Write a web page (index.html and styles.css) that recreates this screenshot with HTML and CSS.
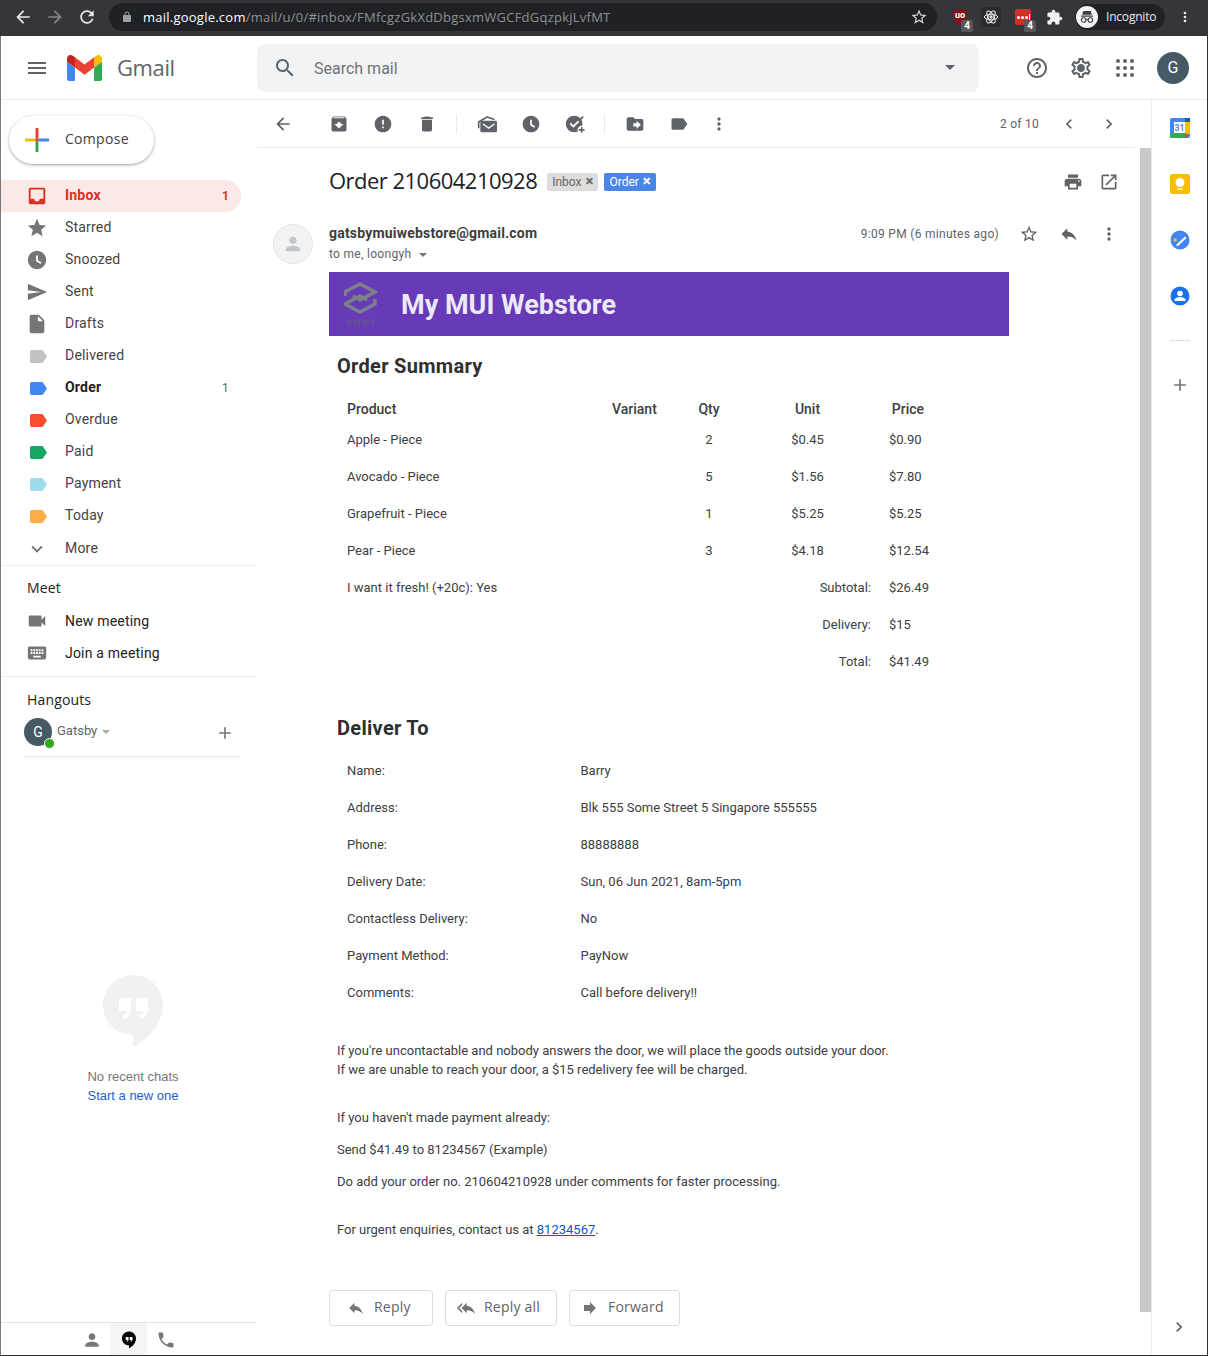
FILE: index.html
```html
<!DOCTYPE html>
<html lang="en">
<head>
    <meta charset="UTF-8">
    <meta name="viewport" content="width=device-width, initial-scale=1.0">
    <title>Order 210604210928 - Gmail</title>
    <link rel="stylesheet" href="styles.css">
</head>
<body>
    <svg class="sprite" xmlns="http://www.w3.org/2000/svg">
        <symbol id="i-back" viewBox="0 0 24 24"><path d="M20 11H7.83l5.59-5.59L12 4l-8 8 8 8 1.41-1.41L7.83 13H20v-2z"/></symbol>
        <symbol id="i-refresh" viewBox="0 0 24 24"><path d="M17.65 6.35C16.2 4.9 14.21 4 12 4c-4.42 0-7.99 3.58-7.99 8s3.57 8 7.99 8c3.73 0 6.84-2.55 7.73-6h-2.08c-.82 2.33-3.04 4-5.65 4-3.31 0-6-2.69-6-6s2.69-6 6-6c1.66 0 3.14.69 4.22 1.78L13 11h7V4l-2.35 2.35z"/></symbol>
        <symbol id="i-lock" viewBox="0 0 24 24"><path d="M18 8h-1V6c0-2.76-2.24-5-5-5S7 3.24 7 6v2H6c-1.1 0-2 .9-2 2v10c0 1.1.9 2 2 2h12c1.1 0 2-.9 2-2V10c0-1.1-.9-2-2-2zM9 6c0-1.66 1.34-3 3-3s3 1.34 3 3v2H9V6z"/></symbol>
        <symbol id="i-star-o" viewBox="0 0 24 24"><path d="M22 9.24l-7.19-.62L12 2 9.19 8.63 2 9.24l5.46 4.73L5.82 21 12 17.27 18.18 21l-1.63-7.03L22 9.24zM12 15.4l-3.76 2.27 1-4.28-3.32-2.88 4.38-.38L12 6.1l1.71 4.04 4.38.38-3.32 2.88 1 4.28L12 15.4z"/></symbol>
        <symbol id="i-star" viewBox="0 0 24 24"><path d="M12 17.27L18.18 21l-1.64-7.03L22 9.24l-7.19-.61L12 2 9.19 8.63 2 9.24l5.46 4.73L5.82 21z"/></symbol>
        <symbol id="i-puzzle" viewBox="0 0 24 24"><path d="M20.5 11H19V7c0-1.1-.9-2-2-2h-4V3.5C13 2.12 11.88 1 10.5 1S8 2.12 8 3.5V5H4c-1.1 0-1.99.9-1.99 2v3.8H3.5c1.49 0 2.7 1.21 2.7 2.7s-1.21 2.7-2.7 2.7H2V20c0 1.1.9 2 2 2h3.8v-1.5c0-1.49 1.21-2.7 2.7-2.7 1.49 0 2.7 1.21 2.7 2.7V22H17c1.1 0 2-.9 2-2v-4h1.5c1.38 0 2.5-1.12 2.5-2.5S21.88 11 20.5 11z"/></symbol>
        <symbol id="i-more" viewBox="0 0 24 24"><circle cx="12" cy="6" r="2"/><circle cx="12" cy="12" r="2"/><circle cx="12" cy="18" r="2"/></symbol>
        <symbol id="i-menu" viewBox="0 0 24 24"><path d="M3 18h18v-2H3v2zm0-5h18v-2H3v2zm0-7v2h18V6H3z"/></symbol>
        <symbol id="i-search" viewBox="0 0 24 24"><path d="M15.5 14h-.79l-.28-.27C15.41 12.59 16 11.11 16 9.5 16 5.91 13.09 3 9.5 3S3 5.91 3 9.5 5.91 16 9.5 16c1.61 0 3.09-.59 4.23-1.57l.27.28v.79l5 4.99L20.49 19l-4.99-5zm-6 0C7.01 14 5 11.99 5 9.5S7.01 5 9.5 5 14 7.01 14 9.5 11.99 14 9.5 14z"/></symbol>
        <symbol id="i-help" viewBox="0 0 24 24"><path d="M11 18h2v-2h-2v2zm1-16C6.48 2 2 6.48 2 12s4.48 10 10 10 10-4.48 10-10S17.52 2 12 2zm0 18c-4.41 0-8-3.59-8-8s3.59-8 8-8 8 3.59 8 8-3.59 8-8 8zm0-14c-2.21 0-4 1.79-4 4h2c0-1.1.9-2 2-2s2 .9 2 2c0 2-3 1.75-3 5h2c0-2.25 3-2.5 3-5 0-2.21-1.79-4-4-4z"/></symbol>
        <symbol id="i-gear" viewBox="0 0 24 24"><path d="M19.43 12.98c.04-.32.07-.64.07-.98 0-.34-.03-.66-.07-.98l2.11-1.65c.19-.15.24-.42.12-.64l-2-3.46c-.09-.16-.26-.25-.44-.25-.06 0-.12.01-.17.03l-2.49 1c-.52-.4-1.08-.73-1.69-.98l-.38-2.65C14.46 2.18 14.25 2 14 2h-4c-.25 0-.46.18-.49.42l-.38 2.65c-.61.25-1.17.59-1.69.98l-2.49-1c-.06-.02-.12-.03-.18-.03-.17 0-.34.09-.43.25l-2 3.46c-.13.22-.07.49.12.64l2.11 1.65c-.04.32-.07.65-.07.98 0 .33.03.66.07.98l-2.11 1.65c-.19.15-.24.42-.12.64l2 3.46c.09.16.26.25.44.25.06 0 .12-.01.17-.03l2.49-1c.52.4 1.08.73 1.69.98l.38 2.65c.03.24.24.42.49.42h4c.25 0 .46-.18.49-.42l.38-2.65c.61-.25 1.17-.59 1.69-.98l2.49 1c.06.02.12.03.18.03.17 0 .34-.09.43-.25l2-3.46c.12-.22.07-.49-.12-.64l-2.11-1.65zm-1.98-1.71c.04.31.05.52.05.73 0 .21-.02.43-.05.73l-.14 1.13.89.7 1.08.84-.7 1.21-1.27-.51-1.04-.42-.9.68c-.43.32-.84.56-1.25.73l-1.06.43-.16 1.13-.2 1.35h-1.4l-.19-1.35-.16-1.13-1.06-.43c-.43-.18-.83-.41-1.23-.71l-.91-.7-1.06.43-1.27.51-.7-1.21 1.08-.84.89-.7-.14-1.13c-.03-.31-.05-.54-.05-.74s.02-.43.05-.73l.14-1.13-.89-.7-1.08-.84.7-1.21 1.27.51 1.04.42.9-.68c.43-.32.84-.56 1.25-.73l1.06-.43.16-1.13.2-1.35h1.39l.19 1.35.16 1.13 1.06.43c.43.18.83.41 1.23.71l.91.7 1.06-.43 1.27-.51.7 1.21-1.07.85-.89.7.14 1.13zM12 8c-2.21 0-4 1.79-4 4s1.79 4 4 4 4-1.79 4-4-1.79-4-4-4z"/></symbol>
        <symbol id="i-apps" viewBox="0 0 24 24"><circle cx="5" cy="5" r="2"/><circle cx="12" cy="5" r="2"/><circle cx="19" cy="5" r="2"/><circle cx="5" cy="12" r="2"/><circle cx="12" cy="12" r="2"/><circle cx="19" cy="12" r="2"/><circle cx="5" cy="19" r="2"/><circle cx="12" cy="19" r="2"/><circle cx="19" cy="19" r="2"/></symbol>
        <symbol id="i-inbox" viewBox="0 0 24 24"><path d="M19 3H5c-1.1 0-2 .9-2 2v14c0 1.1.9 2 2 2h14c1.1 0 2-.9 2-2V5c0-1.1-.9-2-2-2zm0 12h-4c0 1.66-1.34 3-3 3s-3-1.34-3-3H5V5h14v10z"/></symbol>
        <symbol id="i-clock" viewBox="0 0 24 24"><path d="M11.99 2C6.47 2 2 6.48 2 12s4.47 10 9.99 10C17.52 22 22 17.52 22 12S17.52 2 11.99 2zM15.8 16.4L11 13.4V7h2v5.3l3.9 2.4-1.1 1.7z"/></symbol>
        <symbol id="i-send" viewBox="0 0 24 24"><path d="M2.01 21L23 12 2.01 3 2 10l15 2-15 2z"/></symbol>
        <symbol id="i-file" viewBox="0 0 24 24"><path d="M6 2c-1.1 0-1.99.9-1.99 2L4 20c0 1.1.89 2 1.99 2H18c1.1 0 2-.9 2-2V8l-6-6H6zm7 7V3.5L18.5 9H13z"/></symbol>
        <symbol id="i-tag" viewBox="3 5 19 14" preserveAspectRatio="none"><path d="M17.63 5.84C17.27 5.33 16.67 5 16 5L5 5.01C3.9 5.01 3 5.9 3 7v10c0 1.1.9 1.99 2 1.99L16 19c.67 0 1.27-.33 1.63-.84L22 12l-4.37-6.16z"/></symbol>
        <symbol id="i-label" viewBox="0 0 24 24"><path d="M17.63 5.84C17.27 5.33 16.67 5 16 5L5 5.01C3.9 5.01 3 5.9 3 7v10c0 1.1.9 1.99 2 1.99L16 19c.67 0 1.27-.33 1.63-.84L22 12l-4.37-6.16z"/></symbol>
        <symbol id="i-down" viewBox="0 0 24 24"><path d="M16.59 8.59L12 13.17 7.41 8.59 6 10l6 6 6-6z"/></symbol>
        <symbol id="i-video" viewBox="0 0 24 24"><path d="M17 10.5V7c0-.55-.45-1-1-1H4c-.55 0-1 .45-1 1v10c0 .55.45 1 1 1h12c.55 0 1-.45 1-1v-3.5l4 4v-11l-4 4z"/></symbol>
        <symbol id="i-keyboard" viewBox="0 0 24 24"><path d="M20 5H4c-1.1 0-1.99.9-1.99 2L2 17c0 1.1.9 2 2 2h16c1.1 0 2-.9 2-2V7c0-1.1-.9-2-2-2zm-9 3h2v2h-2V8zm0 3h2v2h-2v-2zM8 8h2v2H8V8zm0 3h2v2H8v-2zm-1 2H5v-2h2v2zm0-3H5V8h2v2zm9 7H8v-2h8v2zm0-4h-2v-2h2v2zm0-3h-2V8h2v2zm3 3h-2v-2h2v2zm0-3h-2V8h2v2z"/></symbol>
        <symbol id="i-plus" viewBox="0 0 24 24"><path d="M19 13h-6v6h-2v-6H5v-2h6V5h2v6h6v2z"/></symbol>
        <symbol id="i-person" viewBox="0 0 24 24"><path d="M12 12c2.21 0 4-1.79 4-4s-1.79-4-4-4-4 1.79-4 4 1.79 4 4 4zm0 2c-2.67 0-8 1.34-8 4v2h16v-2c0-2.66-5.33-4-8-4z"/></symbol>
        <symbol id="i-phone" viewBox="0 0 24 24"><path d="M6.62 10.79c1.44 2.83 3.76 5.14 6.59 6.59l2.2-2.2c.27-.27.67-.36 1.02-.24 1.12.37 2.33.57 3.57.57.55 0 1 .45 1 1V20c0 .55-.45 1-1 1-9.39 0-17-7.61-17-17 0-.55.45-1 1-1h3.5c.55 0 1 .45 1 1 0 1.25.2 2.45.57 3.57.11.35.03.74-.25 1.02l-2.2 2.2z"/></symbol>
        <symbol id="i-chat" viewBox="0 0 60 72"><path d="M30 0C13.4 0 0 13.4 0 30s13.4 30 30 30v12c16-8 30-24 30-42C60 13.4 46.6 0 30 0z"/><path class="quote" d="M16 23h12v11c0 5-3 9-8 10v-4c2-.5 3.5-2 4-4h-8zM33 23h12v11c0 5-3 9-8 10v-4c2-.5 3.5-2 4-4h-8z"/></symbol>
        <symbol id="i-archive" viewBox="0 0 24 24"><path d="M20.54 5.23l-1.39-1.68C18.88 3.21 18.47 3 18 3H6c-.47 0-.88.21-1.16.55L3.46 5.23C3.17 5.57 3 6.02 3 6.5V19c0 1.1.9 2 2 2h14c1.1 0 2-.9 2-2V6.5c0-.48-.17-.93-.46-1.27zM12 17.5L6.5 12H10v-2h4v2h3.5L12 17.5zM5.12 5l.81-1h12l.94 1H5.12z"/></symbol>
        <symbol id="i-report" viewBox="0 0 24 24"><path d="M12 2C6.48 2 2 6.48 2 12s4.48 10 10 10 10-4.48 10-10S17.52 2 12 2zm1 15h-2v-2h2v2zm0-4h-2V7h2v6z"/></symbol>
        <symbol id="i-delete" viewBox="0 0 24 24"><path d="M6 19c0 1.1.9 2 2 2h8c1.1 0 2-.9 2-2V7H6v12zM19 4h-3.5l-1-1h-5l-1 1H5v2h14V4z"/></symbol>
        <symbol id="i-unread" viewBox="0 0 24 24"><path class="roof" d="M2 17V9.5L12 3.5l9 3"/><path fill-rule="evenodd" d="M6 8h16c1.1 0 2 .9 2 2v10c0 1.1-.9 2-2 2H6c-1.1 0-2-.9-2-2V10c0-1.1.9-2 2-2zM7 11l7 5 7-5v2l-7 5-7-5z"/></symbol>
        <symbol id="i-task" viewBox="0 0 24 24"><path fill-rule="evenodd" d="M11 2a10 10 0 1 0 0 20 10 10 0 0 0 0-20zM10 16.5L5.5 12 7 10.5l3 3 6-6L17.5 9z"/><path d="M15.5 8L21 2.5 22.5 4 17 9.5z"/><circle class="quote" cx="20" cy="19" r="5"/><path d="M19 15.5h2V18h2.5v2H21v2.5h-2V20h-2.5v-2H19z"/></symbol>
        <symbol id="i-move" viewBox="0 0 24 24"><path d="M20 6h-8l-2-2H4c-1.1 0-2 .9-2 2v12c0 1.1.9 2 2 2h16c1.1 0 2-.9 2-2V8c0-1.1-.9-2-2-2zm-6 12v-3h-4v-4h4V8l5 5-5 5z"/></symbol>
        <symbol id="i-left" viewBox="0 0 24 24"><path d="M15.41 7.41L14 6l-6 6 6 6 1.41-1.41L10.83 12z"/></symbol>
        <symbol id="i-right" viewBox="0 0 24 24"><path d="M10 6L8.59 7.41 13.17 12l-4.58 4.59L10 18l6-6z"/></symbol>
        <symbol id="i-print" viewBox="0 0 24 24"><path d="M19 8H5c-1.66 0-3 1.34-3 3v6h4v4h12v-4h4v-6c0-1.66-1.34-3-3-3zm-3 11H8v-5h8v5zm3-7c-.55 0-1-.45-1-1s.45-1 1-1 1 .45 1 1-.45 1-1 1zm-1-9H6v4h12V3z"/></symbol>
        <symbol id="i-open" viewBox="0 0 24 24"><path d="M19 19H5V5h7V3H5c-1.11 0-2 .9-2 2v14c0 1.1.89 2 2 2h14c1.1 0 2-.9 2-2v-7h-2v7zM14 3v2h3.59l-9.83 9.83 1.41 1.41L19 6.41V10h2V3h-7z"/></symbol>
        <symbol id="i-reply" viewBox="0 0 24 24"><path d="M10 9V5l-7 7 7 7v-4.1c5 0 8.5 1.6 11 5.1-1-5-4-10-11-11z"/></symbol>
        <symbol id="i-replyall" viewBox="0 0 24 24"><path d="M7 8V5l-7 7 7 7v-3l-4-4 4-4zm6 1V5l-7 7 7 7v-4.1c5 0 8.5 1.6 11 5.1-1-5-4-10-11-11z"/></symbol>
        <symbol id="i-forward" viewBox="0 0 24 24"><path d="M12 8V4l8 8-8 8v-4H4V8z"/></symbol>
    </svg>

    <div class="chrome">
        <svg class="c-ico"><use href="#i-back"/></svg>
        <svg class="c-ico c-dim"><use href="#i-back" transform="rotate(180 10 10)"/></svg>
        <svg class="c-ico"><use href="#i-refresh"/></svg>
        <div class="omnibox">
            <svg class="lock"><use href="#i-lock"/></svg>
            <span class="url"><b>mail.google.com</b>/mail/u/0/#inbox/FMfcgzGkXdDbgsxmWGCFdGqzpkjLvfMT</span>
            <svg class="omni-star"><use href="#i-star-o"/></svg>
        </div>
        <div class="ext ext-ublock">
            <svg viewBox="0 0 16 18" width="16" height="16"><path fill="#8a0f12" d="M1 2l7-2 7 2v7c0 4-3 7-7 9-4-2-7-5-7-9z"/></svg>
            <span class="ext-mark">uo</span>
            <span class="ext-badge">4</span>
        </div>
        <div class="ext ext-react">
            <svg viewBox="0 0 24 24" width="16" height="16" fill="none" stroke="#e8eaed" stroke-width="1.5"><ellipse cx="12" cy="12" rx="10" ry="4.2"/><ellipse cx="12" cy="12" rx="10" ry="4.2" transform="rotate(60 12 12)"/><ellipse cx="12" cy="12" rx="10" ry="4.2" transform="rotate(120 12 12)"/><circle cx="12" cy="12" r="1.8" fill="#e8eaed"/></svg>
        </div>
        <div class="ext ext-lastpass">
            <span class="lp-box"><i></i><i></i><i></i><em></em></span>
            <span class="ext-badge">4</span>
        </div>
        <svg class="c-ico puzzle"><use href="#i-puzzle"/></svg>
        <div class="incognito">
            <span class="inc-face">
                <svg viewBox="0 0 24 24" width="18" height="18"><path fill="#3c4043" d="M4 10h16v1.5H4zM7 4h10l1.5 5h-13z"/><g fill="none" stroke="#3c4043" stroke-width="1.5"><circle cx="7.5" cy="16" r="3"/><circle cx="16.5" cy="16" r="3"/><path d="M10.5 15.5h3"/></g></svg>
            </span>
            <span class="inc-text">Incognito</span>
        </div>
        <svg class="c-ico c-more"><use href="#i-more"/></svg>
    </div>

    <div class="app">
        <header class="topbar">
            <div class="brand">
                <svg class="ico hamburger"><use href="#i-menu"/></svg>
                <svg class="logo" viewBox="52 42 88 66" preserveAspectRatio="none">
                    <path fill="#4285f4" d="M58 108h14V74L52 59v43c0 3.32 2.69 6 6 6"/>
                    <path fill="#34a853" d="M120 108h14c3.32 0 6-2.69 6-6V59l-20 15"/>
                    <path fill="#fbbc04" d="M120 48v26l20-15v-8c0-7.42-8.47-11.65-14.4-7.2"/>
                    <path fill="#ea4335" d="M72 74V48l24 18 24-18v26L96 92"/>
                    <path fill="#c5221f" d="M52 51v8l20 15V48l-5.6-4.2c-5.94-4.45-14.4-.22-14.4 7.2"/>
                </svg>
                <span class="brand-name">Gmail</span>
            </div>
            <div class="searchbox">
                <svg class="ico"><use href="#i-search"/></svg>
                <span class="search-text">Search mail</span>
                <span class="caret"></span>
            </div>
            <div class="top-actions">
                <svg class="ico"><use href="#i-help"/></svg>
                <svg class="ico"><use href="#i-gear"/></svg>
                <svg class="ico"><use href="#i-apps"/></svg>
                <span class="avatar avatar-top">G</span>
            </div>
        </header>

        <div class="main">
            <aside class="sidebar">
                <div class="compose">
                    <svg viewBox="0 0 24 24" width="24" height="24">
                        <path fill="#fbbc04" d="M0 10.5h10.5v3H0z"/>
                        <path fill="#4285f4" d="M13.5 10.5H24v3H13.5z"/>
                        <path fill="#ea4335" d="M10.5 0h3v10.5h-3z"/>
                        <path fill="#34a853" d="M10.5 13.5h3V24h-3z"/>
                        <path fill="#d33" d="M10.5 10.5h3v3h-3z"/>
                    </svg>
                    <span class="compose-text">Compose</span>
                </div>

                <nav class="nav">
                    <a class="nav-row active"><svg class="nav-ico"><use href="#i-inbox"/></svg><span>Inbox</span><em>1</em></a>
                    <a class="nav-row"><svg class="nav-ico"><use href="#i-star"/></svg><span>Starred</span></a>
                    <a class="nav-row"><svg class="nav-ico"><use href="#i-clock"/></svg><span>Snoozed</span></a>
                    <a class="nav-row"><svg class="nav-ico"><use href="#i-send"/></svg><span>Sent</span></a>
                    <a class="nav-row"><svg class="nav-ico"><use href="#i-file"/></svg><span>Drafts</span></a>
                    <a class="nav-row"><svg class="tag tag-gray"><use href="#i-tag"/></svg><span>Delivered</span></a>
                    <a class="nav-row strong"><svg class="tag tag-blue"><use href="#i-tag"/></svg><span>Order</span><em>1</em></a>
                    <a class="nav-row"><svg class="tag tag-red"><use href="#i-tag"/></svg><span>Overdue</span></a>
                    <a class="nav-row"><svg class="tag tag-green"><use href="#i-tag"/></svg><span>Paid</span></a>
                    <a class="nav-row"><svg class="tag tag-sky"><use href="#i-tag"/></svg><span>Payment</span></a>
                    <a class="nav-row"><svg class="tag tag-orange"><use href="#i-tag"/></svg><span>Today</span></a>
                    <a class="nav-row nav-more"><svg class="nav-ico"><use href="#i-down"/></svg><span>More</span></a>
                </nav>

                <section class="side-section meet">
                    <h4>Meet</h4>
                    <a class="nav-row"><svg class="nav-ico"><use href="#i-video"/></svg><span>New meeting</span></a>
                    <a class="nav-row"><svg class="nav-ico"><use href="#i-keyboard"/></svg><span>Join a meeting</span></a>
                </section>

                <section class="side-section hangouts">
                    <h4>Hangouts</h4>
                    <div class="hangout-user">
                        <span class="avatar avatar-small">G<i class="online"></i></span>
                        <span class="hangout-name">Gatsby</span>
                        <span class="caret caret-small"></span>
                        <svg class="hangout-add"><use href="#i-plus"/></svg>
                    </div>
                </section>

                <div class="no-chats">
                    <svg class="chat-big"><use href="#i-chat"/></svg>
                    <p>No recent chats</p>
                    <a>Start a new one</a>
                </div>

                <div class="side-tabs">
                    <span class="side-tab"><svg><use href="#i-person"/></svg></span>
                    <span class="side-tab on"><svg class="chat-small"><use href="#i-chat"/></svg></span>
                    <span class="side-tab"><svg><use href="#i-phone"/></svg></span>
                </div>
            </aside>

            <main class="content">
                <div class="toolbar">
                    <span class="tool"><svg class="ico"><use href="#i-back"/></svg></span>
                    <span class="tool tool-first"><svg class="ico"><use href="#i-archive"/></svg></span>
                    <span class="tool"><svg class="ico"><use href="#i-report"/></svg></span>
                    <span class="tool"><svg class="ico"><use href="#i-delete"/></svg></span>
                    <span class="tool-sep"></span>
                    <span class="tool"><svg class="ico"><use href="#i-unread"/></svg></span>
                    <span class="tool"><svg class="ico"><use href="#i-clock"/></svg></span>
                    <span class="tool"><svg class="ico"><use href="#i-task"/></svg></span>
                    <span class="tool-sep"></span>
                    <span class="tool"><svg class="ico"><use href="#i-move"/></svg></span>
                    <span class="tool"><svg class="ico"><use href="#i-label"/></svg></span>
                    <span class="tool tool-narrow"><svg class="ico"><use href="#i-more"/></svg></span>
                    <span class="pager">2 of 10</span>
                    <span class="tool tool-page"><svg class="ico"><use href="#i-left"/></svg></span>
                    <span class="tool tool-page"><svg class="ico"><use href="#i-right"/></svg></span>
                </div>

                <div class="mail-wrap">
                    <div class="mail">
                        <div class="subject-row">
                            <h2 class="subject">Order 210604210928</h2>
                            <span class="chip chip-gray">Inbox <b>×</b></span>
                            <span class="chip chip-blue">Order <b>×</b></span>
                            <span class="subject-actions">
                                <svg class="ico"><use href="#i-print"/></svg>
                                <svg class="ico"><use href="#i-open"/></svg>
                            </span>
                        </div>

                        <div class="sender-row">
                            <span class="sender-pic"><svg><use href="#i-person"/></svg></span>
                            <div class="sender-info">
                                <div class="sender-name">gatsbymuiwebstore@gmail.com</div>
                                <div class="sender-to">to me, loongyh <span class="caret caret-small"></span></div>
                            </div>
                            <span class="sender-time">9:09 PM (6 minutes ago)</span>
                            <span class="sender-actions">
                                <svg class="ico"><use href="#i-star-o"/></svg>
                                <svg class="ico"><use href="#i-reply"/></svg>
                                <svg class="ico"><use href="#i-more"/></svg>
                            </span>
                        </div>

                        <div class="email">
                            <div class="banner">
                                <svg class="store-logo" viewBox="0 0 34 44">
                                    <path d="M1 14V10L16 2l15 8-15 8-7-4"/>
                                    <path d="M31 17v5l-15 8-15-8 15-8 7 4"/>
                                    <text x="17" y="43" text-anchor="middle">GMWS</text>
                                </svg>
                                <span class="banner-title">My MUI Webstore</span>
                            </div>

                            <h3 class="email-h first">Order Summary</h3>
                            <table class="order">
                                <colgroup>
                                    <col class="c-product"><col class="c-variant"><col class="c-qty"><col class="c-unit"><col class="c-price">
                                </colgroup>
                                <thead>
                                    <tr><th class="left">Product</th><th class="left">Variant</th><th>Qty</th><th>Unit</th><th>Price</th></tr>
                                </thead>
                                <tbody>
                                    <tr><td>Apple - Piece</td><td></td><td class="mid">2</td><td class="mid">$0.45</td><td>$0.90</td></tr>
                                    <tr><td>Avocado - Piece</td><td></td><td class="mid">5</td><td class="mid">$1.56</td><td>$7.80</td></tr>
                                    <tr><td>Grapefruit - Piece</td><td></td><td class="mid">1</td><td class="mid">$5.25</td><td>$5.25</td></tr>
                                    <tr><td>Pear - Piece</td><td></td><td class="mid">3</td><td class="mid">$4.18</td><td>$12.54</td></tr>
                                    <tr><td colspan="3">I want it fresh! (+20c): Yes</td><td class="sum">Subtotal:</td><td>$26.49</td></tr>
                                    <tr><td colspan="3"></td><td class="sum">Delivery:</td><td>$15</td></tr>
                                    <tr><td colspan="3"></td><td class="sum">Total:</td><td>$41.49</td></tr>
                                </tbody>
                            </table>

                            <h3 class="email-h">Deliver To</h3>
                            <table class="deliver">
                                <tr><td class="d-key">Name:</td><td>Barry</td></tr>
                                <tr><td class="d-key">Address:</td><td>Blk 555 Some Street 5 Singapore 555555</td></tr>
                                <tr><td class="d-key">Phone:</td><td>88888888</td></tr>
                                <tr><td class="d-key">Delivery Date:</td><td>Sun, 06 Jun 2021, 8am-5pm</td></tr>
                                <tr><td class="d-key">Contactless Delivery:</td><td>No</td></tr>
                                <tr><td class="d-key">Payment Method:</td><td>PayNow</td></tr>
                                <tr><td class="d-key">Comments:</td><td>Call before delivery!!</td></tr>
                            </table>

                            <p class="note note-first">If you're uncontactable and nobody answers the door, we will place the goods outside your door.<br>If we are unable to reach your door, a $15 redelivery fee will be charged.</p>
                            <p class="note note-gap">If you haven't made payment already:</p>
                            <p class="note note-small">Send $41.49 to 81234567 (Example)</p>
                            <p class="note note-small">Do add your order no. 210604210928 under comments for faster processing.</p>
                            <p class="note note-gap">For urgent enquiries, contact us at <a class="link">81234567</a>.</p>
                        </div>

                        <div class="reply-btns">
                            <span class="reply-btn b-reply"><svg><use href="#i-reply"/></svg><span>Reply</span></span>
                            <span class="reply-btn b-all"><svg><use href="#i-replyall"/></svg><span>Reply all</span></span>
                            <span class="reply-btn b-fwd"><svg><use href="#i-forward"/></svg><span>Forward</span></span>
                        </div>
                    </div>
                    <div class="scrollbar"></div>
                </div>
            </main>

            <aside class="rail">
                <svg class="rail-ico" viewBox="0 0 20 20">
                    <rect width="20" height="20" rx="2" fill="#4285f4"/>
                    <rect x="15" y="4" width="5" height="12" fill="#fbbc04"/>
                    <rect y="15" width="16" height="5" fill="#34a853"/>
                    <rect x="15" width="5" height="4" fill="#1a56c4"/>
                    <path d="M15 16h5l-5 4z" fill="#ea4335"/>
                    <rect x="4" y="4" width="11" height="11" fill="#fff"/>
                    <text x="9.5" y="13" text-anchor="middle">31</text>
                </svg>
                <svg class="rail-ico" viewBox="0 0 20 20">
                    <rect width="20" height="20" rx="2" fill="#fbbc04"/>
                    <circle cx="10" cy="8.5" r="4.5" fill="#fff"/>
                    <rect x="7.5" y="14.5" width="5" height="1.5" fill="#fff"/>
                </svg>
                <svg class="rail-ico" viewBox="0 0 20 20">
                    <circle cx="10" cy="10" r="9.5" fill="#4285f4"/>
                    <path d="M6.5 14.5l8.5-8 1.5 1.5-8.5 8H6.5z" fill="#fff"/>
                    <circle cx="5" cy="10" r="1.8" fill="#fbbc04"/>
                </svg>
                <svg class="rail-ico" viewBox="0 0 20 20">
                    <circle cx="10" cy="10" r="9.5" fill="#1a73e8"/>
                    <circle cx="10" cy="7.5" r="2.8" fill="#fff"/>
                    <path d="M4.5 14c0-2 3.5-3 5.5-3s5.5 1 5.5 3v1h-11z" fill="#fff"/>
                </svg>
                <span class="rail-sep"></span>
                <svg class="ico rail-plus"><use href="#i-plus"/></svg>
                <svg class="ico rail-chev"><use href="#i-right"/></svg>
            </aside>
        </div>
    </div>
</body>
</html>
```

FILE: styles.css
```css
* {
    box-sizing: border-box;
}
html, body {
    margin: 0;
    height: 1356px;
    overflow: hidden;
}
body {
    font-family: Roboto, "Liberation Sans", sans-serif;
    font-size: 14px;
    color: #202124;
    background: #fff;
}
.sprite {
    display: none;
}

/* browser bar */
.chrome {
    height: 36px;
    padding-bottom: 2px;
    background: #35363a;
    display: flex;
    align-items: center;
    position: relative;
}
.c-ico {
    width: 20px;
    height: 20px;
    fill: #e8eaed;
    margin-left: 12px;
}
.c-ico:first-child {
    margin-left: 13px;
}
.c-dim {
    fill: #84878b;
}
.omnibox {
    width: 828px;
    height: 28px;
    margin-left: 12px;
    background: #202124;
    border-radius: 14px;
    display: flex;
    align-items: center;
    padding: 0 8px 0 12px;
}
.lock {
    width: 12px;
    height: 12px;
    fill: #9aa0a6;
}
.url {
    margin-left: 10px;
    font-family: "Open Sans", sans-serif;
    font-size: 13px;
    letter-spacing: 0.24px;
    color: #8e9194;
    white-space: nowrap;
}
.url b {
    font-weight: 400;
    color: #fff;
}
.omni-star {
    width: 18px;
    height: 18px;
    fill: #d6d8da;
    margin-left: auto;
    margin-right: 1px;
}
.ext {
    width: 20px;
    height: 20px;
    position: relative;
    display: flex;
    align-items: center;
    justify-content: center;
}
.ext-ublock {
    margin-left: 13px;
}
.ext-react {
    margin-left: 11px;
    background: #2b2c2f;
}
.ext-lastpass {
    margin-left: 12px;
}
.ext-mark {
    position: absolute;
    left: 5px;
    top: 3px;
    font-size: 9px;
    line-height: 10px;
    font-weight: 700;
    color: #fff;
}
.ext-badge {
    position: absolute;
    right: -3px;
    bottom: -5px;
    width: 12px;
    height: 12px;
    background: #55575b;
    border-radius: 2px;
    color: #fff;
    font-size: 10px;
    font-weight: 700;
    line-height: 12px;
    text-align: center;
}
.lp-box {
    width: 16px;
    height: 16px;
    background: #d32d27;
    border-radius: 2px;
    display: flex;
    align-items: center;
    justify-content: center;
    gap: 1px;
}
.lp-box i {
    width: 3px;
    height: 3px;
    border-radius: 50%;
    background: #fff;
}
.lp-box em {
    width: 1px;
    height: 6px;
    background: #fff;
}
.puzzle {
    width: 17px;
    height: 17px;
    margin-left: 13px;
    fill: #f1f3f4;
}
.incognito {
    width: 90px;
    height: 26px;
    margin-left: 12px;
    background: #202124;
    border-radius: 13px;
    display: flex;
    align-items: center;
    gap: 8px;
    padding-left: 1px;
    font-family: "Open Sans", sans-serif;
    font-size: 12px;
    color: #e8eaed;
    letter-spacing: -0.2px;
}
.inc-text {
    padding-bottom: 1px;
}
.inc-face {
    width: 22px;
    height: 22px;
    border-radius: 50%;
    background: #f1f3f4;
    display: flex;
    align-items: center;
    justify-content: center;
}
.c-more {
    width: 16px;
    height: 16px;
    margin-left: 12px;
}

/* gmail frame */
.app {
    height: 1320px;
    border-left: 1px solid #77797c;
    border-right: 1px solid #2f3133;
    border-bottom: 1px solid #2f3133;
    display: flex;
    flex-direction: column;
}
.ico {
    width: 24px;
    height: 24px;
    fill: #5f6368;
    flex: none;
}
.topbar {
    height: 64px;
    flex: none;
    display: flex;
    align-items: center;
    border-bottom: 1px solid #eceded;
}
.brand {
    width: 256px;
    display: flex;
    align-items: center;
}
.hamburger {
    margin-left: 24px;
}
.logo {
    width: 35px;
    height: 26px;
    margin-left: 18px;
}
.brand-name {
    margin-left: 15px;
    padding-bottom: 2px;
    font-family: "Open Sans", sans-serif;
    font-size: 22px;
    color: #5f6368;
    letter-spacing: -0.4px;
}
.searchbox {
    width: 722px;
    height: 48px;
    background: #f1f3f4;
    border-radius: 8px;
    display: flex;
    align-items: center;
    padding: 0 24px 0 16px;
}
.search-text {
    margin-left: 17px;
    padding-top: 2px;
    font-size: 16px;
    color: #6f7377;
}
.caret {
    width: 0;
    height: 0;
    border-left: 5px solid transparent;
    border-right: 5px solid transparent;
    border-top: 5px solid #5f6368;
    margin-left: auto;
}
.caret-small {
    display: inline-block;
    margin-left: 3px;
    border-left-width: 4px;
    border-right-width: 4px;
    border-top: 4px solid #777;
    vertical-align: middle;
}
.top-actions {
    display: flex;
    align-items: center;
    gap: 20px;
    margin-left: 46px;
}
.avatar {
    border-radius: 50%;
    background: #455a64;
    color: #fff;
    display: flex;
    align-items: center;
    justify-content: center;
    position: relative;
}
.avatar-top {
    width: 32px;
    height: 32px;
    font-size: 16px;
}
.main {
    flex: 1;
    display: flex;
    min-height: 0;
}

/* left column */
.sidebar {
    width: 256px;
    flex: none;
    display: flex;
    flex-direction: column;
}
.compose {
    width: 145px;
    height: 48px;
    margin: 16px 0 0 8px;
    border-radius: 24px;
    background: #fff;
    box-shadow: 0 1px 2px rgba(60,64,67,0.3), 0 1px 3px 1px rgba(60,64,67,0.15);
    display: flex;
    align-items: center;
    padding-left: 16px;
    gap: 16px;
    font-family: "Open Sans", sans-serif;
    font-size: 14px;
    color: #3c4043;
}
.compose svg {
    flex: none;
}
.compose-text {
    padding-bottom: 3px;
    letter-spacing: 0.3px;
}
.nav {
    margin-top: 16px;
    padding-bottom: 1px;
    border-bottom: 1px solid #eceded;
    height: 386px;
}
.nav .nav-row span {
    padding-bottom: 2px;
}
.nav-row {
    width: 240px;
    height: 32px;
    display: flex;
    align-items: center;
    padding-left: 28px;
    border-radius: 0 16px 16px 0;
    color: #444;
    letter-spacing: 0.2px;
}
.nav-row span {
    flex: 1;
}
.nav-row em {
    font-style: normal;
    font-size: 12px;
    margin-right: 12px;
}
.nav-ico {
    width: 22px;
    height: 22px;
    fill: #757575;
    margin: 0 17px 0 -3px;
    flex: none;
}
.tag {
    width: 17px;
    height: 13px;
    margin: 0 18px 0 1px;
    flex: none;
}
.tag-gray { fill: #c2c2c2; }
.tag-blue { fill: #4285f4; }
.tag-red { fill: #fb4c2f; }
.tag-green { fill: #16a765; }
.tag-sky { fill: #9fdcea; }
.tag-orange { fill: #ffad47; }
.active {
    background: #fce8e6;
    color: #d93025;
    font-weight: 700;
}
.active .nav-ico {
    fill: #d93025;
}
.strong {
    color: #202124;
    font-weight: 700;
}
.strong em {
    font-weight: 400;
    color: #5f6368;
}
.nav-more {
    height: 33px;
}
.side-section h4 {
    margin: 0;
    padding-left: 26px;
    font-family: "Open Sans", sans-serif;
    font-weight: 500;
    font-size: 14px;
    letter-spacing: 0.15px;
    color: #202124;
    line-height: 20px;
}
.meet {
    height: 111px;
    padding-top: 12px;
    border-bottom: 1px solid #eceded;
}
.meet h4 {
    margin-bottom: 7px;
}
.meet .nav-row {
    color: #202124;
}
.hangouts {
    padding-top: 13px;
}
.hangout-user {
    width: 217px;
    height: 47px;
    margin: 0 0 0 23px;
    padding-top: 8px;
    display: flex;
    align-items: flex-start;
    border-bottom: 1px solid #e3e4e5;
    color: #5f6368;
    font-size: 13px;
    position: relative;
}
.avatar-small {
    width: 28px;
    height: 28px;
    font-size: 14px;
}
.online {
    position: absolute;
    right: -3px;
    bottom: -3px;
    width: 11px;
    height: 11px;
    background: #34a81f;
    border: 1px solid #fff;
    border-radius: 50%;
}
.hangout-name {
    margin: 5px 0 0 5px;
}
.hangout-user .caret-small {
    margin: 12px 0 0 5px;
    border-top-color: #aaa;
}
.hangout-add {
    width: 20px;
    height: 20px;
    fill: #777;
    margin: 5px 6px 0 auto;
}
.no-chats {
    margin-top: 218px;
    text-align: center;
    font-family: "Liberation Sans", sans-serif;
    font-size: 13px;
    line-height: 19px;
    padding-left: 8px;
}
.chat-big {
    display: block;
    width: 60px;
    height: 72px;
    margin: 0 auto 20px;
    fill: #f1f1f1;
}
.quote {
    fill: #fff;
}
.roof {
    fill: none;
    stroke: #5f6368;
    stroke-width: 2;
}
.no-chats p {
    margin: 0;
    color: #777;
}
.no-chats a {
    color: #1a5fd0;
}
.side-tabs {
    margin-top: auto;
    height: 33px;
    border-top: 1px solid #e3e4e5;
    display: flex;
    justify-content: center;
    padding-right: 1px;
}
.side-tab {
    width: 37px;
    padding-top: 1px;
    display: flex;
    align-items: center;
    justify-content: center;
}
.side-tab svg {
    width: 20px;
    height: 20px;
    fill: #777;
}
.side-tab.on {
    background: #f5f5f5;
}
.side-tab .chat-small {
    width: 14px;
    height: 18px;
    fill: #000;
}

/* message column */
.content {
    flex: 1;
    min-width: 0;
    display: flex;
    flex-direction: column;
}
.toolbar {
    height: 48px;
    flex: none;
    margin-right: 16px;
    padding: 0 6px 0 4px;
    display: flex;
    align-items: center;
    border-bottom: 1px solid #eceded;
}
.tool {
    width: 44px;
    height: 24px;
    display: flex;
    justify-content: center;
    flex: none;
}
.tool .ico {
    width: 20px;
    height: 20px;
    margin-top: 2px;
}
.tool-first {
    margin-left: 12px;
}
.tool-narrow {
    width: 36px;
}
.tool-page {
    width: 40px;
}
.tool-sep {
    width: 1px;
    height: 20px;
    margin: 0 8px 0 7px;
    background: #e8eaed;
}
.pager {
    margin: 0 10px 0 auto;
    font-size: 12px;
    color: #5f6368;
    letter-spacing: 0.25px;
}
.mail-wrap {
    flex: 1;
    display: flex;
    min-height: 0;
}
.mail {
    flex: 1;
    min-width: 0;
    padding-left: 72px;
}
.scrollbar {
    width: 11px;
    height: 1164px;
    flex: none;
    background: #c9c9c9;
}
.subject-row {
    height: 66px;
    display: flex;
    align-items: flex-start;
    padding-top: 18px;
    position: relative;
}
.subject {
    margin: 0 10px 0 0;
    font-family: "Open Sans", sans-serif;
    font-weight: 400;
    font-size: 22px;
    line-height: 28px;
    letter-spacing: -0.52px;
    color: #202124;
}
.chip {
    height: 18px;
    margin: 7px 6px 0 0;
    padding: 0 5px;
    border-radius: 2px;
    font-size: 12px;
    line-height: 18px;
}
.chip b {
    font-size: 15px;
    line-height: 15px;
    font-weight: 700;
    margin-left: 1px;
}
.chip-gray {
    background: #dddddd;
    color: #666;
}
.chip-blue {
    background: #4a86e8;
    color: #fff;
}
.subject-actions {
    position: absolute;
    right: 21px;
    top: 24px;
    display: flex;
    gap: 16px;
}
.subject-actions .ico {
    width: 20px;
    height: 20px;
}
.sender-row {
    height: 48px;
    margin-top: 10px;
    display: flex;
    align-items: flex-start;
    position: relative;
}
.sender-pic {
    position: absolute;
    left: -56px;
    top: 0;
    width: 40px;
    height: 40px;
    border-radius: 50%;
    background: #f1f3f4;
    border: 1px solid #e6e6e6;
    display: flex;
    align-items: center;
    justify-content: center;
}
.sender-pic svg {
    width: 22px;
    height: 22px;
    fill: #c4c7ca;
}
.sender-name {
    font-weight: 700;
    font-size: 14px;
    line-height: 18px;
    letter-spacing: 0.2px;
    color: #3c3c3c;
}
.sender-to {
    margin-top: 4px;
    font-size: 12px;
    line-height: 16px;
    letter-spacing: 0.3px;
    color: #5f6368;
}
.sender-to .caret-small {
    margin-left: 4px;
}
.sender-time {
    margin-left: auto;
    margin-right: 141px;
    font-size: 12px;
    line-height: 20px;
    color: #5f6368;
    letter-spacing: 0.3px;
}
.sender-actions {
    position: absolute;
    right: 21px;
    top: 0;
    display: flex;
    gap: 20px;
}
.sender-actions .ico {
    width: 20px;
    height: 20px;
}

/* email body */
.email {
    width: 680px;
    font-size: 13px;
    line-height: 18px;
    color: #3c4043;
}
.banner {
    height: 64px;
    background: #673ab7;
    display: flex;
    align-items: center;
}
.store-logo {
    width: 34px;
    height: 44px;
    margin-left: 15px;
}
.store-logo path {
    fill: none;
    stroke: #7c8088;
    stroke-width: 3.5;
}
.store-logo text {
    font-size: 8px;
    font-family: "Open Sans", sans-serif;
    font-weight: 700;
    fill: #5e5a85;
    letter-spacing: 1px;
}
.banner-title {
    margin-left: 23px;
    padding-top: 1px;
    font-size: 27px;
    font-weight: 700;
    color: #eceaf6;
}
.email-h {
    margin: 26px 0 22px 8px;
    font-size: 20px;
    line-height: 24px;
    font-weight: 700;
    letter-spacing: 0.3px;
    color: #2f2f2f;
}
.email-h.first {
    margin: 18px 0 20px 8px;
}
.order,
.deliver {
    margin-left: 8px;
    border-collapse: collapse;
    table-layout: fixed;
    width: 600px;
}
.c-product { width: 265px; }
.c-variant { width: 80px; }
.c-qty { width: 54px; }
.c-unit { width: 143px; }
.c-price { width: 58px; }
.order thead tr {
    height: 33px;
}
.order th {
    padding: 2px 0 0;
    font-size: 14px;
    font-weight: 500;
    text-align: center;
    color: #3c4043;
    vertical-align: top;
}
.order th.left {
    text-align: left;
    padding-left: 10px;
}
.order td,
.deliver td {
    padding: 0 0 19px 10px;
    vertical-align: top;
}
.order td {
    white-space: nowrap;
}
.order td.mid {
    padding-left: 0;
    text-align: center;
}
.order td.sum {
    padding: 0 8px 19px 0;
    text-align: right;
}
.d-key {
    width: 233.5px;
}
.note {
    margin: 0 0 0 8px;
}
.note-first {
    margin-top: 21px;
    line-height: 18.5px;
}
.note-gap {
    margin-top: 30px;
}
.note-small {
    margin-top: 14px;
}
.link {
    color: #1155cc;
    text-decoration: underline;
}
.reply-btns {
    display: flex;
    gap: 12px;
    margin-top: 51px;
}
.reply-btn {
    height: 36px;
    border: 1px solid #dadce0;
    border-radius: 4px;
    display: flex;
    align-items: center;
    font-family: "Open Sans", sans-serif;
    font-size: 14px;
    letter-spacing: 0.2px;
    color: #5f6368;
}
.reply-btn span {
    padding-bottom: 3px;
}
.reply-btn svg {
    width: 18px;
    height: 18px;
    fill: #757575;
    margin: 0 9px 0 17px;
}
.b-reply { width: 104px; }
.b-all { width: 112px; }
.b-fwd { width: 111px; }
.b-all svg,
.b-fwd svg {
    margin-left: 11px;
}

/* right rail */
.rail {
    width: 56px;
    flex: none;
    border-left: 1px solid #eceded;
    display: flex;
    flex-direction: column;
    align-items: center;
    padding: 18px 0 0 1px;
}
.rail-ico {
    width: 20px;
    height: 20px;
    margin-bottom: 36px;
    flex: none;
}
.rail-ico text {
    font-size: 8.5px;
    font-weight: 700;
    fill: #4285f4;
}
.rail-sep {
    width: 20px;
    height: 1px;
    background: #dadce0;
    margin-top: -2px;
}
.rail-plus {
    width: 20px;
    height: 20px;
    fill: #777;
    margin-top: 34px;
}
.rail-chev {
    width: 20px;
    height: 20px;
    margin: auto 2px 18px 0;
}
```
